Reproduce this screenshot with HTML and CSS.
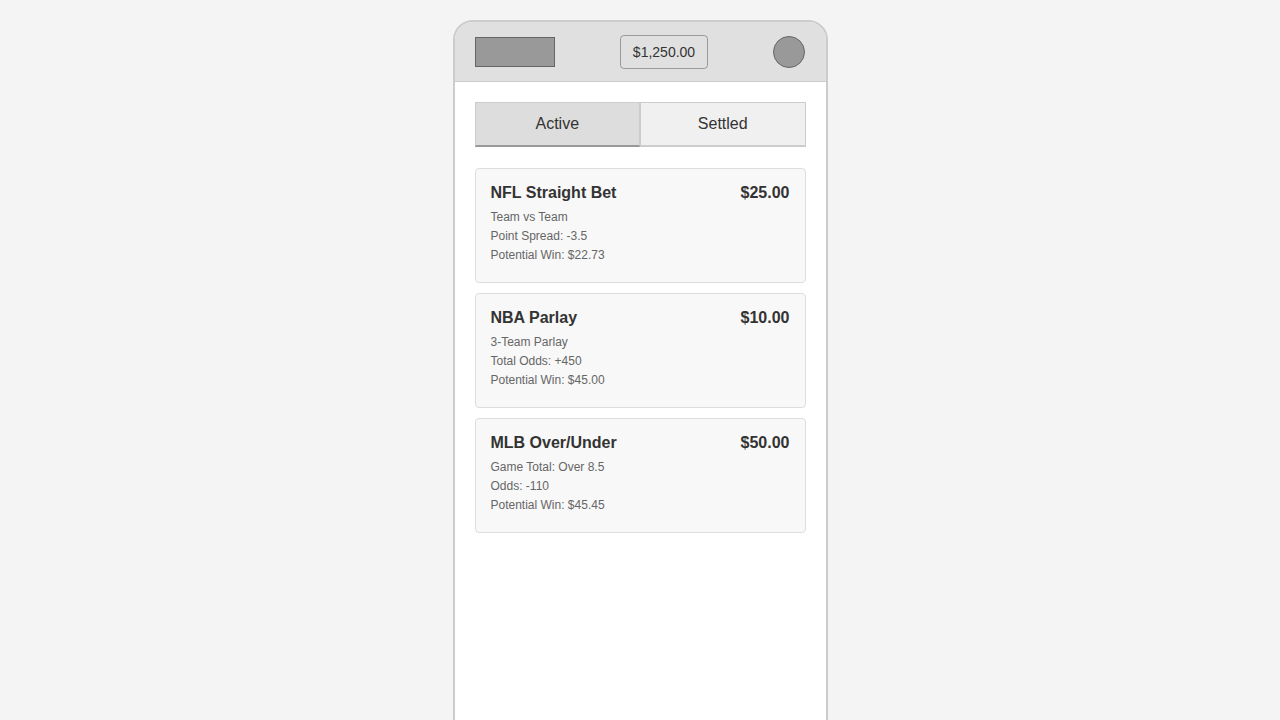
FILE: index.html
```html
<!DOCTYPE html>
<html lang="en">

<head>
    <meta charset="UTF-8">
    <meta name="viewport" content="width=device-width, initial-scale=1.0">
    <title>My Bets</title>
    <link rel="stylesheet" href="styles.css">
</head>

<body>
    <div class="phone">
        <header class="top-bar">
            <div class="logo"></div>
            <div class="balance">$1,250.00</div>
            <div class="avatar"></div>
        </header>

        <main class="content">
            <div class="tabs">
                <button class="tab active">Active</button>
                <button class="tab">Settled</button>
            </div>

            <div class="bet-card">
                <div class="bet-head">
                    <span class="bet-title">NFL Straight Bet</span>
                    <span class="bet-amount">$25.00</span>
                </div>
                <div class="bet-line">Team vs Team</div>
                <div class="bet-line">Point Spread: -3.5</div>
                <div class="bet-line">Potential Win: $22.73</div>
            </div>

            <div class="bet-card">
                <div class="bet-head">
                    <span class="bet-title">NBA Parlay</span>
                    <span class="bet-amount">$10.00</span>
                </div>
                <div class="bet-line">3-Team Parlay</div>
                <div class="bet-line">Total Odds: +450</div>
                <div class="bet-line">Potential Win: $45.00</div>
            </div>

            <div class="bet-card">
                <div class="bet-head">
                    <span class="bet-title">MLB Over/Under</span>
                    <span class="bet-amount">$50.00</span>
                </div>
                <div class="bet-line">Game Total: Over 8.5</div>
                <div class="bet-line">Odds: -110</div>
                <div class="bet-line">Potential Win: $45.45</div>
            </div>
        </main>
    </div>
</body>

</html>
```

FILE: styles.css
```css
* {
    box-sizing: border-box;
}

body {
    margin: 0;
    padding: 20px 0 0;
    font-family: "Liberation Sans", Arial, sans-serif;
    color: #333;
    background-color: #f4f4f4;
}

.phone {
    width: 375px;
    min-height: 812px;
    margin: 0 auto;
    background-color: #fff;
    border: 2px solid #ccc;
    border-radius: 20px;
    overflow: hidden;
}

.top-bar {
    display: flex;
    align-items: center;
    justify-content: space-between;
    height: 60px;
    padding: 0 20px;
    background-color: #e0e0e0;
    border-bottom: 1px solid #ccc;
}

.logo {
    width: 80px;
    height: 30px;
    background-color: #999;
    border: 1px solid #666;
}

.balance {
    padding: 8px 12px;
    font-size: 14px;
    line-height: 16px;
    border: 1px solid #999;
    border-radius: 4px;
}

.avatar {
    width: 32px;
    height: 32px;
    background-color: #999;
    border: 1px solid #666;
    border-radius: 50%;
}

.content {
    padding: 20px;
}

.tabs {
    display: flex;
    margin-bottom: 21px;
}

.tab {
    flex: 1;
    height: 45px;
    padding: 0;
    font-family: inherit;
    font-size: 16px;
    color: #333;
    background-color: #f0f0f0;
    border: 1px solid #ccc;
    border-bottom: 2px solid #ccc;
}

.tab.active {
    background-color: #ddd;
    border-bottom-color: #999;
}

.bet-card {
    height: 115px;
    margin-bottom: 10px;
    padding: 15px;
    background-color: #f8f8f8;
    border: 1px solid #ddd;
    border-radius: 4px;
}

.bet-head {
    display: flex;
    justify-content: space-between;
    margin-bottom: 6px;
    font-size: 16px;
    font-weight: bold;
}

.bet-line {
    font-size: 12px;
    line-height: 19px;
    color: #666;
}
```
